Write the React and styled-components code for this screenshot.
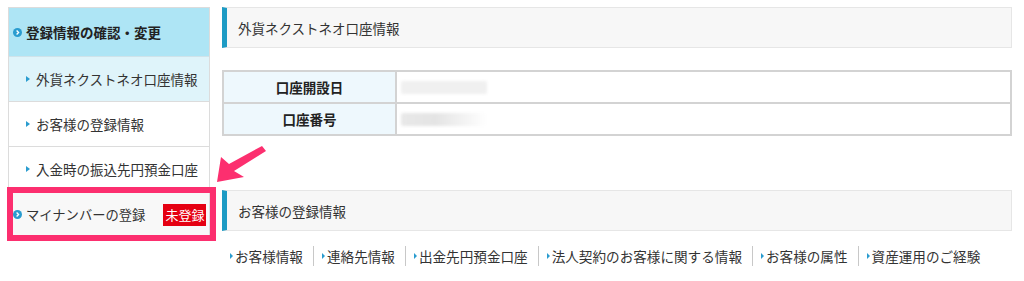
import React from 'react'
import styled, {createGlobalStyle} from 'styled-components'

const GlobalStyle = createGlobalStyle`
  html, body {
    margin: 0;
    background: #fff;
  }
  body {
    font-family: "Noto Sans CJK JP", "Noto Sans", sans-serif;
    color: #333;
  }
`

const menuItems = [
  {label: '外貨ネクストネオ口座情報', active: true},
  {label: 'お客様の登録情報'},
  {label: '入金時の振込先円預金口座'},
]

const links = ['お客様情報', '連絡先情報', '出金先円預金口座', '法人契約のお客様に関する情報', 'お客様の属性', '資産運用のご経験']

function CircleIcon() {
  return (
    <svg width="9" height="9" viewBox="0 0 10 10" style={{flexShrink: 0}}>
      <circle cx="5" cy="5" r="5" fill="#2a9ccf" />
      <path d="M4 2.8 L6.2 5 L4 7.2" stroke="#fff" strokeWidth="1.5" fill="none" />
    </svg>
  )
}

export default function App() {
  return (
    <Page>
      <GlobalStyle />
      <Sidebar>
        <SideHeader>
          <CircleIcon />
          <span>登録情報の確認・変更</span>
        </SideHeader>
        {menuItems.map(item => (
          <SideItem key={item.label} active={item.active}>
            <Tri />
            <span>{item.label}</span>
          </SideItem>
        ))}
        <MyNumberItem>
          <CircleIcon />
          <span>マイナンバーの登録</span>
          <Badge>未登録</Badge>
          <HighlightBox />
        </MyNumberItem>
      </Sidebar>

      <Main>
        <Heading>外貨ネクストネオ口座情報</Heading>
        <InfoTable>
          <tbody>
            <tr>
              <Th>口座開設日</Th>
              <Td><Masked /></Td>
            </tr>
            <tr>
              <Th>口座番号</Th>
              <Td><Masked dark /></Td>
            </tr>
          </tbody>
        </InfoTable>

        <Heading spaced>お客様の登録情報</Heading>
        <LinkRow>
          {links.map((l, i) => (
            <LinkItem key={l} last={i === links.length - 1}>
              <Tri small />
              {l}
            </LinkItem>
          ))}
        </LinkRow>
      </Main>

      <Arrow width="60" height="44" viewBox="0 0 60 44">
        <polygon points="5,37 9,12 17,19 50,1 54,6 22,26 32,32" fill="#fc2f6f" />
      </Arrow>
    </Page>
  )
}

const Page = styled.div`
  position: relative;
  display: flex;
  gap: 12px;
  padding: 7px 12px 0 8px;
  width: 1024px;
  box-sizing: border-box;
  height: 281px;
  overflow: hidden;
  white-space: nowrap;
`

const Sidebar = styled.div`
  width: 202px;
  flex-shrink: 0;
  border: 1px solid #dcdcdc;
  border-bottom: none;
  box-sizing: border-box;
  align-self: flex-start;
`

const SideHeader = styled.div`
  height: 49px;
  background: #aee5f5;
  display: flex;
  align-items: center;
  gap: 4px;
  padding-left: 4px;
  font-size: 13.5px;
  font-weight: bold;
  color: #222;
  border-bottom: 1px solid #cfe3ea;
  box-sizing: border-box;
`

const SideItem = styled.div`
  height: 45px;
  box-sizing: border-box;
  border-bottom: 1px solid #dcdcdc;
  background: ${p => (p.active ? '#dff4fa' : '#fff')};
  display: flex;
  align-items: center;
  gap: 6px;
  padding-left: 17px;
  font-size: 13.5px;
  color: #333;
`

const MyNumberItem = styled.div`
  position: relative;
  height: 45px;
  background: #f8f8f8;
  display: flex;
  align-items: center;
  gap: 4px;
  padding-left: 4px;
  font-size: 13.3px;
  color: #333;
`

const Badge = styled.span`
  flex-shrink: 0;
  margin-left: 14px;
  background: #e50012;
  color: #fff;
  font-size: 13px;
  line-height: 22px;
  padding: 0 2px;
`

const HighlightBox = styled.div`
  position: absolute;
  left: -2px;
  top: -5px;
  width: 209px;
  height: 54px;
  border: 6px solid #fc2f6f;
  box-sizing: border-box;
`

const Tri = styled.span`
  display: inline-block;
  width: 0;
  height: 0;
  border-top: 3.5px solid transparent;
  border-bottom: 3.5px solid transparent;
  border-left: ${p => (p.small ? 3 : 4)}px solid #2a9ccf;
  flex-shrink: 0;
`

const Main = styled.div`
  flex: 1;
  display: flex;
  flex-direction: column;
`

const Heading = styled.div`
  height: 41px;
  box-sizing: border-box;
  margin-top: ${p => (p.spaced ? '54px' : '0')};
  background: #f7f7f7;
  border: 1px solid #e6e6e6;
  border-left: 5px solid #1d9bc4;
  display: flex;
  align-items: center;
  padding-left: 11px;
  font-size: 13.5px;
  color: #333;
`

const InfoTable = styled.table`
  margin-top: 22px;
  width: 100%;
  border-collapse: collapse;
  border: 2px solid #d3d3d3;
`

const Th = styled.th`
  width: 171px;
  height: 30px;
  background: #eef8fd;
  border: 2px solid #d3d3d3;
  font-size: 13.5px;
  font-weight: bold;
  color: #222;
  text-align: center;
  padding: 0;
`

const Td = styled.td`
  border: 2px solid #d3d3d3;
  padding: 0 0 0 4px;
  background: #fff;
`

const Masked = styled.div`
  width: 86px;
  height: 13px;
  border-radius: 2px;
  background: ${p => (p.dark ? 'linear-gradient(90deg, #e8e8e8 0%, #e4e4e4 40%, #fff 100%)' : '#f0f0f0')};
  filter: blur(1.5px);
`

const LinkRow = styled.div`
  display: flex;
  align-items: center;
  margin-top: 15px;
  padding-left: 8px;
  font-size: 13.6px;
  line-height: 20px;
  color: #333;
`

const LinkItem = styled.div`
  display: flex;
  align-items: center;
  gap: 2px;
  padding-right: ${p => (p.last ? '0' : '10px')};
  margin-right: ${p => (p.last ? '0' : '8px')};
  border-right: ${p => (p.last ? 'none' : '1px solid #c8c8c8')};
`

const Arrow = styled.svg`
  position: absolute;
  left: 212px;
  top: 145px;
`
